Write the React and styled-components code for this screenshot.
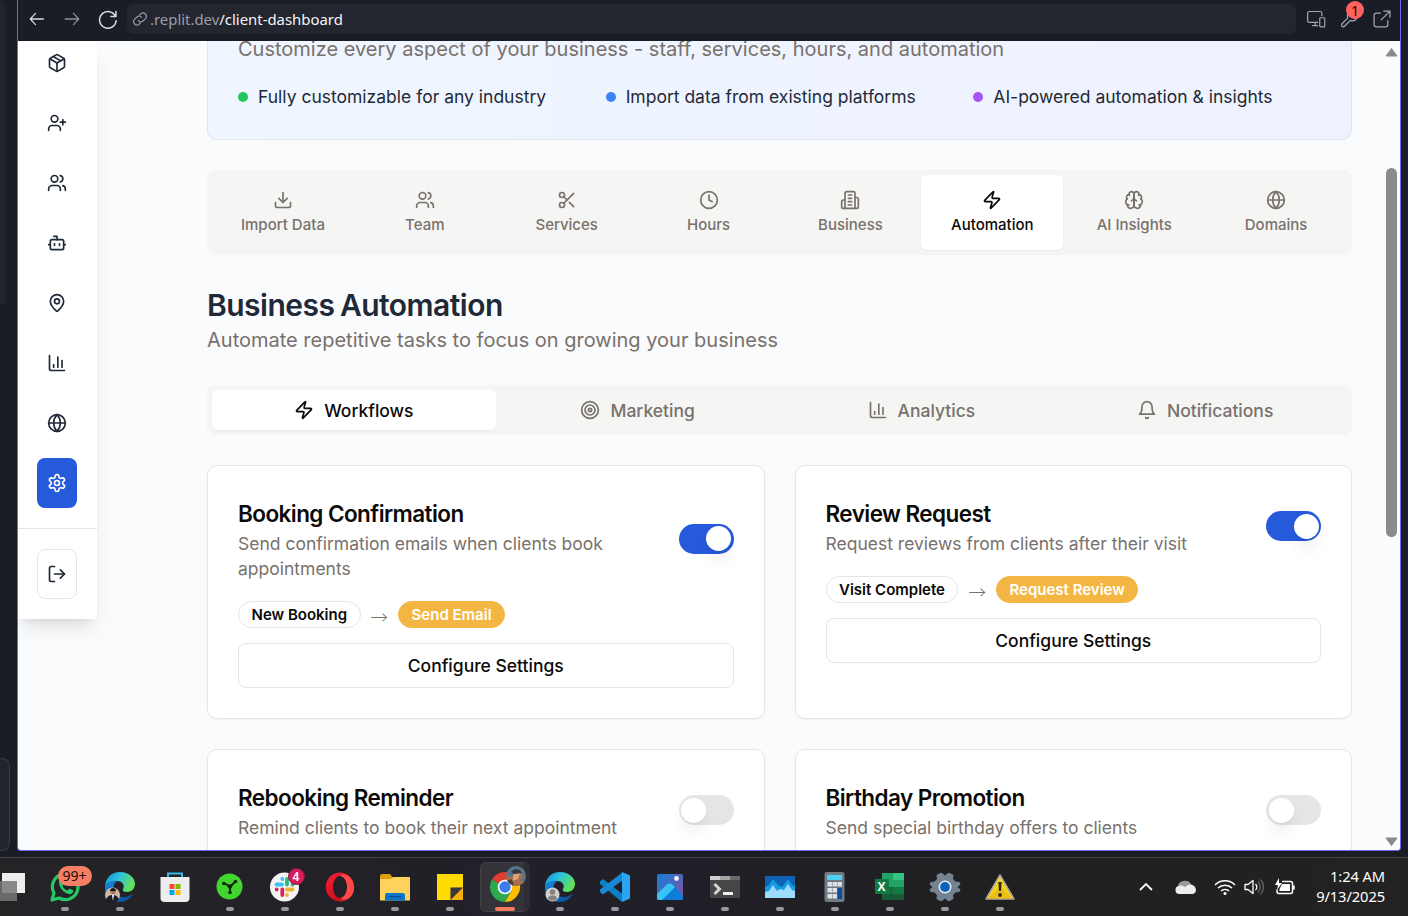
import React from "react";
import styled, { createGlobalStyle, css } from "styled-components";
import {
  Package, UserPlus, Users, Bot, MapPin, ChartColumn, Globe, LogOut, Download, Scissors, Clock, Zap, Target,
} from "lucide-react";

const GlobalStyle = createGlobalStyle`
  *, *::before, *::after { box-sizing: border-box; }
  body { margin: 0; background: #1b1d26; font-family: Inter, "Liberation Sans", sans-serif; }
  button { font: inherit; }
  h2, h3, p { margin: 0; }
`;

/* ---------- shared line icons ---------- */

const Line = ({ size = 20, width = 2, children }) => (
  <svg width={size} height={size} viewBox="0 0 24 24" fill="none" stroke="currentColor" strokeWidth={width}
    strokeLinecap="round" strokeLinejoin="round">{children}</svg>
);

const Gear = () => (
  <Line>
    <path d="M12.22 2h-.44a2 2 0 0 0-2 2v.18a2 2 0 0 1-1 1.73l-.43.25a2 2 0 0 1-2 0l-.15-.08a2 2 0 0 0-2.73.73l-.22.38a2 2 0 0 0 .73 2.73l.15.1a2 2 0 0 1 1 1.72v.51a2 2 0 0 1-1 1.74l-.15.09a2 2 0 0 0-.73 2.73l.22.38a2 2 0 0 0 2.73.73l.15-.08a2 2 0 0 1 2 0l.43.25a2 2 0 0 1 1 1.73V20a2 2 0 0 0 2 2h.44a2 2 0 0 0 2-2v-.18a2 2 0 0 1 1-1.73l.43-.25a2 2 0 0 1 2 0l.15.08a2 2 0 0 0 2.73-.73l.22-.39a2 2 0 0 0-.73-2.73l-.15-.08a2 2 0 0 1-1-1.74v-.5a2 2 0 0 1 1-1.74l.15-.09a2 2 0 0 0 .73-2.73l-.22-.38a2 2 0 0 0-2.73-.73l-.15.08a2 2 0 0 1-2 0l-.43-.25a2 2 0 0 1-1-1.73V4a2 2 0 0 0-2-2z" />
    <circle cx="12" cy="12" r="3" />
  </Line>
);
const Building = () => (
  <Line>
    <path d="M6 22V4a2 2 0 0 1 2-2h8a2 2 0 0 1 2 2v18Z" />
    <path d="M6 12H4a2 2 0 0 0-2 2v6a2 2 0 0 0 2 2h2" />
    <path d="M18 9h2a2 2 0 0 1 2 2v9a2 2 0 0 1-2 2h-2" />
    <path d="M10 6h4M10 10h4M10 14h4M10 18h4" />
  </Line>
);
const BrainIcon = () => (
  <Line>
    <path d="M12 5a3 3 0 1 0-5.997.125 4 4 0 0 0-2.526 5.77 4 4 0 0 0 .556 6.588A4 4 0 1 0 12 18Z" />
    <path d="M12 5a3 3 0 1 1 5.997.125 4 4 0 0 1 2.526 5.77 4 4 0 0 1-.556 6.588A4 4 0 1 1 12 18Z" />
    <path d="M15 13a4.5 4.5 0 0 1-3-4 4.5 4.5 0 0 1-3 4" />
    <path d="M17.599 6.5a3 3 0 0 0 .399-1.375M6.003 5.125A3 3 0 0 0 6.401 6.5M3.477 10.896a4 4 0 0 1 .585-.396M19.938 10.5a4 4 0 0 1 .585.396M6 18a4 4 0 0 1-1.967-.516M19.967 17.484A4 4 0 0 1 18 18" />
  </Line>
);
const BellIcon = () => (
  <Line>
    <path d="M6 8a6 6 0 0 1 12 0c0 7 3 9 3 9H3s3-2 3-9" />
    <path d="M10.3 21a1.94 1.94 0 0 0 3.4 0" />
  </Line>
);

/* ---------- desktop and window ---------- */

const Desktop = styled.div`
  width: 1408px; height: 916px; overflow: hidden;
  display: flex; flex-direction: column; background: #1b1d26;
`;
const Workspace = styled.div`
  height: 857px; display: flex; padding-bottom: 6px;
`;
const EdgeColumn = styled.div`
  width: 17px; display: flex; flex-direction: column; justify-content: space-between;
`;
const EdgePanel = styled.div`
  width: ${(p) => p.$w}px; height: ${(p) => p.$h}px; background: #22252e;
  border-radius: 0 8px 8px 0;
  ${(p) => p.$outlined && css`border: 1px solid #363944; border-left: 0;`}
`;
const Window = styled.div`
  width: 1384px; height: 851px; display: flex; flex-direction: column;
  border: 1px solid #7160f0; border-top: 0; border-radius: 0 0 4px 4px; overflow: hidden; background: #fafbfd;
`;
const Toolbar = styled.div`
  height: 41px; flex: none; background: #1b1d26; color: #d8dae2;
  display: flex; align-items: center; padding: 0 8px 3px 10px;
`;
const NavIcons = styled.div`
  display: flex; gap: 17px; width: 99px; align-items: center;
  svg:nth-child(2) { color: #8d909c; }
`;
const AddressField = styled.div`
  flex: 1; height: 30px; background: #23262f; border-radius: 6px; color: #9a9da8;
  display: flex; align-items: center; padding-left: 5px; gap: 2px;
  font: 14.9px "Noto Sans", sans-serif; white-space: pre;
  span { padding-bottom: 1px; }
  b { font-weight: 400; color: #f4f5f8; }
`;
const ToolIcons = styled.div`
  display: flex; align-items: center; gap: 13px; padding-left: 10px; color: #a4a7b2;
`;
const BadgeHolder = styled.span`position: relative; display: flex;`;
const CountDot = styled.span`
  position: absolute; left: 7px; top: -8px; width: 18px; height: 18px; border-radius: 50%;
  background: #ff625f; color: #33090b; font: 15px/18px "Noto Sans", sans-serif; text-align: center;
`;

const Page = styled.div`flex: 1; min-height: 0; display: flex; overflow: hidden;`;

const Sidebar = styled.aside`
  width: 79px; height: 578px; flex: none; background: #fff; padding-bottom: 20px;
  box-shadow: 0 12.5px 19px -4px rgba(0,0,0,.1), 0 5px 7.5px -5px rgba(0,0,0,.1);
  display: flex; flex-direction: column; align-items: flex-start; overflow: visible;
`;
const SideNav = styled.nav`
  width: 100%; height: 488px; border-bottom: 1px solid #e2e4e8;
  display: flex; flex-direction: column; align-items: flex-start; justify-content: flex-end; gap: 10px; padding-bottom: 20px;
`;
const SideButton = styled.button`
  width: 40px; height: 50px; flex: none; margin-left: 19px; padding: 0; border: 1px solid transparent; border-radius: 8px;
  display: flex; align-items: center; justify-content: center;
  background: ${(p) => (p.$active ? "#255bdb" : "#fff")}; color: ${(p) => (p.$active ? "#fff" : "#1f2937")};
  ${(p) => p.$outlined && css`border-color: #e5e5e5; margin-top: 20px;`}
`;

const Main = styled.main`
  width: 1286px; flex: none; padding-left: 110px;
`;
const Content = styled.div`width: 1145px;`;

const Banner = styled.section`
  display: flow-root; height: 99px; padding: 0 30px;
  border: 1px solid #e3e5eb; border-top: 0; border-radius: 0 0 10px 10px;
  background: linear-gradient(90deg, #eff6ff, #eef2ff);
`;
const Muted = styled.p`
  font-size: 20px; line-height: 30px; color: #78716c; white-space: nowrap;
`;
const BannerText = styled(Muted)`margin-top: -7px;`;
const SubHeading = styled(Muted)`padding-top: 1px;`;
const Points = styled.div`
  display: grid; grid-template-columns: repeat(3, 1fr); gap: 20px; margin-top: 20px;
`;
const Point = styled.div`
  display: flex; align-items: center; gap: 10px; font-size: 17.5px; line-height: 25px; color: #1f2937;
  &::before { content: ""; width: 10px; height: 10px; border-radius: 50%; background: ${(p) => p.$dot}; }
`;

const TabBar = styled.div`
  margin-top: 30px; height: 85px; padding: 5px; border-radius: 8px; background: #f5f5f4;
  display: grid; grid-template-columns: repeat(8, 1fr);
`;
const Tab = styled.button`
  border: 0; padding: 0 0 1px; border-radius: 6px; background: ${(p) => (p.$active ? "#fff" : "transparent")};
  color: ${(p) => (p.$active ? "#0c0a09" : "#78716c")};
  box-shadow: ${(p) => (p.$active ? "0 1px 2px rgba(0,0,0,.06)" : "none")};
  display: flex; flex-direction: column; align-items: center; justify-content: center; gap: 5px;
  font-size: 15px; line-height: 20px; font-weight: 500;
`;
const Heading = styled.h2`
  margin-top: 31px; font-size: 30px; line-height: 38px; font-weight: 600; color: #1f2937; letter-spacing: -0.52px;
  word-spacing: -1.5px;
`;
const SubTabBar = styled.div`
  margin-top: 30px; height: 50px; padding: 5px; border-radius: 8px; background: #f5f5f4;
  display: grid; grid-template-columns: repeat(4, 1fr);
`;
const SubTab = styled(Tab)`
  flex-direction: row; gap: 10px; font-size: 17.5px; line-height: 21px; padding: 1px 0 0;
  svg { margin-bottom: 1px; }
`;
const Cards = styled.div`
  margin-top: 30px; display: grid; grid-template-columns: 1fr 1fr; gap: 30px;
`;
const Card = styled.article`
  height: 254px; padding: 30px; background: #fff; border: 1px solid #e5e6e8; border-radius: 10px;
  box-shadow: 0 1px 2px rgba(0,0,0,.05);
`;
const CardHead = styled.header`
  display: flex; align-items: center; justify-content: space-between; margin-bottom: 20px;
`;
const CardTitle = styled.h3`
  font-size: 22.5px; line-height: 35px; font-weight: 600; letter-spacing: -0.56px; color: #0c0a09;
`;
const CardText = styled.p`
  width: 400px; font-size: 17.5px; line-height: 25px; color: #78716c;
`;
const Switch = styled.span`
  width: 55px; height: 30px; flex: none; border-radius: 15px; padding: 2.5px; display: flex;
  justify-content: ${(p) => (p.$on ? "flex-end" : "flex-start")};
  background: ${(p) => (p.$on ? "#255bdb" : "#e5e5e4")};
  &::before {
    content: ""; width: 25px; height: 25px; border-radius: 50%; background: #fff;
    box-shadow: 0 12px 18px -4px rgba(0,0,0,.1), 0 5px 7px -5px rgba(0,0,0,.1);
  }
`;
const Flow = styled.div`
  display: flex; align-items: center; gap: 10px; height: 27px; margin-bottom: 15px; color: #78716c;
`;
const Pill = styled.span`
  height: 27px; padding: 0 12.5px; border-radius: 14px; border: 1px solid ${(p) => (p.$filled ? "#f4b643" : "#e5e5e5")};
  background: ${(p) => (p.$filled ? "#f4b643" : "#fff")}; color: ${(p) => (p.$filled ? "#fff" : "#0c0a09")};
  font-size: 15px; line-height: 25px; font-weight: 600; white-space: nowrap;
`;
const FlowArrow = styled.span`
  width: 17.5px; font: 300 17.5px/27px "Noto Sans CJK JP", sans-serif; padding-top: 3px;
`;
const ConfigureButton = styled.button`
  width: 100%; height: 45px; border: 1px solid #e5e5e5; border-radius: 8px; background: #fff; color: #0c0a09;
  font-size: 17.5px; font-weight: 500; padding: 0;
`;

const Scrollbar = styled.div`
  width: 17px; flex: none; background: #fcfcfc; display: flex; flex-direction: column; align-items: center;
  padding: 6px 0 3px 0; justify-content: space-between;
`;
const ScrollThumb = styled.div`
  width: 11px; height: 369px; border-radius: 6px; background: #8b8b8b; margin-bottom: 190px;
`;

/* ---------- taskbar ---------- */

const Taskbar = styled.footer`
  height: 59px; display: flex; border-top: 1px solid #46464b;
  background: linear-gradient(90deg, #242326 0%, #211f28 45%, #202020 75%, #222 100%);
`;
const AppCell = styled.div`
  position: relative; width: ${(p) => p.$w || 55}px; flex: none; display: flex; flex-direction: column;
  align-items: center; padding-top: 14px; height: 58px;
  svg { display: block; overflow: visible; }
`;
const RunMark = styled.i`
  width: ${(p) => (p.$current ? 20 : 8)}px; height: 4px; border-radius: 2px; margin-top: 5px; flex: none;
  background: ${(p) => (p.$current ? "#f47b61" : "#98979b")};
`;
const ActiveTile = styled.div`
  position: absolute; left: 2px; top: 4px; width: 50px; height: 50px; border-radius: 6px;
  background: #343339; border: 1px solid #403f44; border-right-width: 6px; border-right-color: #2d2c32;
  & ~ * { z-index: 1; }
`;
const UnreadPill = styled.span`
  position: absolute; left: 20px; top: 8px; width: 34px; height: 20px; border-radius: 10px; background: #f47f64;
  color: #1c0e0b; font: 14px/20px "Noto Sans", sans-serif; text-align: center;
`;
const UnreadDot = styled.span`
  position: absolute; left: 30px; top: 10px; width: 17px; height: 17px; border-radius: 50%; background: #d81b5c;
  border: 1px solid #80183f; color: #fff; font: 600 12px/15px "Noto Sans", sans-serif; text-align: center;
`;
const Tray = styled.div`
  margin-left: auto; display: flex; align-items: center; color: #f7f7f7; padding-right: 23px;
  > svg { flex: none; }
`;
const CloudIcon = styled.svg`margin-left: 21px;`;
const WifiIcon = styled.svg`margin-left: 17px;`;
const VolumeIcon = styled.svg`margin-left: 8px;`;
const BatteryIcon = styled.svg`margin-left: 9px;`;
const ClockText = styled.time`
  width: 89px; text-align: right; font: 14.7px/20px "Noto Sans", sans-serif; color: #fff; letter-spacing: -0.1px;
  padding-bottom: 2px;
`;

const AppSvg = ({ children }) => <svg width="30" height="30" viewBox="0 0 30 30">{children}</svg>;

const EdgeArt = ({ id, children }) => (
  <AppSvg>
    <defs>
      <linearGradient id={id + "a"} x1="0" y1="0" x2="1" y2=".4"><stop offset="0" stopColor="#1789d8" /><stop offset=".5" stopColor="#2cc3dd" /><stop offset="1" stopColor="#62e05a" /></linearGradient>
      <linearGradient id={id + "b"} x1="0" y1="0" x2="1" y2="1"><stop offset="0" stopColor="#1687dc" /><stop offset="1" stopColor="#0b4c98" /></linearGradient>
    </defs>
    <path d="M0 14C1 5 7 0 15 0c9 0 15 6 15 12 0 5-4 8-8 8-3 0-5-1-4-3 2-3 0-8-6-8C7 9 2 11 0 14z" fill={`url(#${id}a)`} />
    <path d="M0 14c2-4 7-6 12-5-3 2-4 5-3 9 1 5 7 8 12 7 3-1 5-2 7-3-3 5-8 8-13 8C6 30-1 23 0 14z" fill={`url(#${id}b)`} />
    {children}
  </AppSvg>
);

const WhatsAppArt = () => (
  <AppSvg>
    <path d="M2 28l2-7A12.8 12.8 0 1 1 9 26z" fill="none" stroke="#25c864" strokeWidth="3.2" strokeLinejoin="round" />
    <path d="M9 10c0-2 2-3 3-2l2 4-1.500 2c1 2 2.500 3.500 5 4.500l2-2 4 2c0 2-2 4-4 3.700C14 21.500 9 16 9 10z" fill="#25c864" />
  </AppSvg>
);
const StoreArt = () => (
  <AppSvg>
    <path d="M8 6V1.500h14V6" fill="none" stroke="#36b7ef" strokeWidth="2" />
    <path d="M.5 5h29v21a4 4 0 0 1-4 4h-21a4 4 0 0 1-4-4z" fill="#ededed" />
    <path fill="#f25022" d="M9.500 12h5v5h-5z" /><path fill="#7fba00" d="M15.500 12h5v5h-5z" />
    <path fill="#00a4ef" d="M9.500 18h5v5h-5z" /><path fill="#ffb900" d="M15.500 18h5v5h-5z" />
  </AppSvg>
);
const HubArt = () => (
  <AppSvg>
    <circle cx="14.500" cy="14.500" r="13" fill="#41d62e" />
    <path d="M9 11l6 3.500L20 10M15 14L15 20" stroke="#10250d" strokeWidth="1.800" strokeLinecap="round" fill="none" />
    <path d="M11 12c3 1 5 1 8-1l-3 6h-2z" fill="#10250d" />
    <circle cx="8.800" cy="11.500" r="1.800" fill="#10250d" /><circle cx="20.500" cy="9.500" r="1.800" fill="#10250d" /><circle cx="15" cy="20.500" r="1.800" fill="#10250d" />
  </AppSvg>
);
const SlackArt = () => (
  <AppSvg>
    <circle cx="14.500" cy="15" r="14.500" fill="#f4f4f4" />
    <g strokeWidth="3.800" strokeLinecap="round" fill="none">
      <path d="M6.500 12.500h5.500M12.300 7v.1" stroke="#36c5f0" /><path d="M17 7v5.500M22.500 12.500h.1" stroke="#2eb67d" />
      <path d="M17 17.500h5.500M17 23v.1" stroke="#ecb22e" /><path d="M12.300 17.500V23M6.600 17.500h.1" stroke="#e01e5a" />
    </g>
  </AppSvg>
);
const OperaArt = () => (
  <AppSvg>
    <defs><linearGradient id="op" x1="0" y1="0" x2="1" y2="1"><stop offset="0" stopColor="#ff2035" /><stop offset=".7" stopColor="#c40d1c" /><stop offset="1" stopColor="#ff5a55" /></linearGradient></defs>
    <path fillRule="evenodd" fill="url(#op)" d="M15 .5a14.300 14.500 0 1 0 .01 0zM15 4a7 11 0 1 1-.01 0z" />
    <path d="M15 4c4-3 9-1 11.500 3.500 4 6 3 14-1.500 18-3 2.500-7 2.500-10 .5 4 0 7-5 7-11s-3-11-7-11z" fill="#ff4a48" />
  </AppSvg>
);
const FolderArt = () => (
  <AppSvg>
    <path d="M0 4a2 2 0 0 1 2-2h8l3 4v6H0z" fill="#dc9e0c" />
    <path d="M0 7h11l2-2h17v23.500H0z" fill="#ffd35b" />
    <path d="M5 28.500V23a2 2 0 0 1 2-2h16a2 2 0 0 1 2 2v5.500z" fill="#0d75c9" /><path d="M8.500 24.500h13" stroke="#084f91" strokeWidth="1.200" />
  </AppSvg>
);
const NotesArt = () => (
  <AppSvg>
    <path d="M2 2h26v26H2z" fill="#ffdb05" /><path d="M15.500 15.500H28V28H15.500z" fill="#f3b30b" /><path d="M15.500 15.500H28L15.500 28z" fill="#3a3939" />
  </AppSvg>
);
const ChromeArt = () => (
  <AppSvg>
    <clipPath id="avatar"><circle cx="26" cy="4" r="10" /></clipPath>
    <path d="M15 15L2 7.500A15 15 0 0 1 28 7.500z" fill="#e33b2e" />
    <path d="M15 15L2 7.500A15 15 0 0 0 15 30l6.500-11.300z" fill="#2da94f" />
    <path d="M15 30A15 15 0 0 0 28 7.500H15l6.500 11.200z" fill="#fdbd00" />
    <circle cx="15" cy="15" r="7.300" fill="#fff" /><circle cx="15" cy="15" r="5.700" fill="#3b7ded" />
    <g clipPath="url(#avatar)">
      <path d="M16-6h20v20H16z" fill="#587487" />
      <path d="M16 4l6 1 2-4 7-1 2 5-3 4 6 1v4H20z" fill="#a96d49" />
      <path d="M24 2l6-1-2 6-6 2z" fill="#d7a57c" /><path d="M21 0l4-3 5 1 2 3-8 1z" fill="#303744" />
      <path d="M17 9l5-2 2 7h-5z" fill="#4c3e3c" />
    </g>
  </AppSvg>
);
const CodeArt = () => (
  <AppSvg>
    <path d="M0 9.500L3 7l19.500 15L22 30 0 12z" fill="#0b7fc5" /><path d="M0 20l3 2.500L23 8V0L0 17.500z" fill="#1788d4" />
    <path d="M22 0l8 3.500v23L22 30z" fill="#2aa5f2" />
  </AppSvg>
);
const PhotosArt = () => (
  <AppSvg>
    <defs><linearGradient id="ph" x1="0" y1="0" x2="1" y2="1"><stop offset="0" stopColor="#137fd9" /><stop offset="1" stopColor="#8b4f9f" /></linearGradient></defs>
    <rect x="2" y="2" width="26" height="26" rx="2" fill="url(#ph)" />
    <path d="M2 26l11-14c1.500-2 3-2 5 0l10 12v2a2 2 0 0 1-2 2H4a2 2 0 0 1-2-2z" fill="#0f7cda" />
    <path d="M2 22l10-9.500c1.500-1.500 4-1.500 5.500 0L20 15 7 28H4a2 2 0 0 1-2-2z" fill="#37c4f2" /><circle cx="21.500" cy="6.500" r="2.400" fill="#f2efff" />
  </AppSvg>
);
const TerminalArt = () => (
  <AppSvg>
    <path d="M0 4h30v21a1 1 0 0 1-1 1H1a1 1 0 0 1-1-1z" fill="#464646" /><path d="M0 4h10v4H0z" fill="#d0d0d0" /><path d="M10 4h10v4H10z" fill="#a5a5a5" /><path d="M20 4h10v4H20z" fill="#6b6b6b" />
    <path d="M4.500 12l5 5-5 5" stroke="#d5d5d5" strokeWidth="3" fill="none" /><path d="M13 21.500h10" stroke="#eee" strokeWidth="3" />
  </AppSvg>
);
const MonitorArt = () => (
  <AppSvg>
    <path d="M0 4h30v22H0z" fill="#0d62b5" /><path d="M0 15l3-1 5-7 5 6 4 2 6-8 4 6 3 1v12H0z" fill="#169be2" />
    <path d="M0 20l4-1 4-6 4 6 3-2 4 1 4-6 4 6 3 1v7H0z" fill="#9cdcff" />
  </AppSvg>
);
const CalcArt = () => (
  <AppSvg>
    <rect x="4.500" y="0" width="20" height="30" rx="2" fill="#707a83" /><path d="M7 3h15v5H7z" fill="#4cd0ef" />
    <path d="M7.500 10h4.500v4.500H7.500zM12.500 10H17v4.500h-4.500zM17.500 10H22v4.500h-4.500zM7.500 16h4.500v4.500H7.500zM12.500 16H17v4.500h-4.500zM7.500 22h4.500v4.500H7.500zM12.500 22H17v4.500h-4.500z" fill="#dbe1e6" />
    <path d="M17.500 16H22v11h-4.500z" fill="#0f4d94" />
  </AppSvg>
);
const ExcelLetter = styled.span`
  position: absolute; left: 12px; top: 21px; width: 14px; height: 15px; background: #107c41; border-radius: 1px;
  color: #fff; font: 700 12px/15px "Open Sans", sans-serif; text-align: center;
`;
const ExcelArt = () => (
  <>
    <AppSvg>
      <path d="M7 1h11v14H7z" fill="#21a366" /><path d="M18 1h11v7H18z" fill="#33c481" /><path d="M18 8h11v7H18z" fill="#21a366" />
      <path d="M7 15h11v13H7z" fill="#176b40" /><path d="M18 15h11v7H18z" fill="#107c41" /><path d="M7 22h22v6H7z" fill="#185c37" />
    </AppSvg>
    <ExcelLetter>X</ExcelLetter>
  </>
);
const SettingsArt = () => (
  <AppSvg>
    <path d="M10 1h2l3 2.500L18 1h2l3.500 2-.5 4 2.500 2.500 4 .5 1 2.500-3 2.500 3 2.500-1 2.500-4 .5-2.500 2.500.5 4-3.500 2h-2L15 26.500 12 29h-2l-3.500-2 .5-4-2.500-2.500-4-.5-1-2.500 3-2.500-3-2.500 1-2.500 4-.5L7 7l-.5-4z" fill="#75828f" />
    <circle cx="15" cy="15" r="6.500" fill="#e4edf3" /><circle cx="15" cy="15" r="4.900" fill="#0c61b8" />
  </AppSvg>
);
const WarningArt = () => (
  <AppSvg>
    <path d="M15 3L29 27H1z" fill="#f5d21c" stroke="#aaa7a0" strokeWidth="1.500" strokeLinejoin="round" /><path d="M15 15l13 12H2z" fill="#e1a713" opacity=".45" />
    <path d="M13.300 10h3.400l-.7 9h-2z" fill="#302b14" /><circle cx="15" cy="23" r="1.900" fill="#302b14" />
  </AppSvg>
);
const TaskViewArt = () => (
  <svg width="37" height="30" viewBox="0 0 37 30"><path d="M2 1h23v20H2z" fill="#eee" /><path d="M-4 9h21v20H-4z" fill="#777" opacity=".85" /></svg>
);

const apps = [
  { key: "whatsapp", art: <WhatsAppArt />, extra: <UnreadPill>99+</UnreadPill> },
  { key: "edge-user", art: <EdgeArt id="e1"><circle cx="7.500" cy="23" r="7.500" fill="#ceb9a5" /><path d="M1 28c1-4 4-5 7-5s5 2 6 4c-3 5-9 5-13 1z" fill="#1c1d24" /><circle cx="8" cy="19.500" r="2.600" fill="#a66f58" /><path d="M5 19c0-4 6-4 6 0z" fill="#171719" /><path d="M7 23h2l-1 6z" fill="#fff" /></EdgeArt> },
  { key: "store", art: <StoreArt />, idle: true },
  { key: "hub", art: <HubArt /> },
  { key: "slack", art: <SlackArt />, extra: <UnreadDot>4</UnreadDot> },
  { key: "opera", art: <OperaArt /> },
  { key: "files", art: <FolderArt /> },
  { key: "notes", art: <NotesArt /> },
  { key: "chrome", art: <ChromeArt />, current: true },
  { key: "edge-guest", art: <EdgeArt id="e2"><circle cx="7.500" cy="22.500" r="7" fill="#d2d0ce" /><circle cx="7.500" cy="20" r="2.800" fill="#85827f" /><path d="M3 27c0-5 9-5 9 0-2 2-7 2-9 0z" fill="#85827f" /></EdgeArt> },
  { key: "code", art: <CodeArt /> },
  { key: "photos", art: <PhotosArt /> },
  { key: "terminal", art: <TerminalArt /> },
  { key: "monitor", art: <MonitorArt /> },
  { key: "calc", art: <CalcArt /> },
  { key: "excel", art: <ExcelArt /> },
  { key: "settings", art: <SettingsArt /> },
  { key: "warning", art: <WarningArt /> },
];

const tabs = [
  ["Import Data", <Download size={20} />], ["Team", <Users size={20} />], ["Services", <Scissors size={20} />],
  ["Hours", <Clock size={20} />], ["Business", <Building />], ["Automation", <Zap size={20} />],
  ["AI Insights", <BrainIcon />], ["Domains", <Globe size={20} />],
];
const subTabs = [
  ["Workflows", <Zap size={20} />], ["Marketing", <Target size={20} />],
  ["Analytics", <ChartColumn size={20} />], ["Notifications", <BellIcon />],
];
const workflows = [
  { title: "Booking Confirmation", text: "Send confirmation emails when clients book appointments", from: "New Booking", to: "Send Email", on: true },
  { title: "Review Request", text: "Request reviews from clients after their visit", from: "Visit Complete", to: "Request Review", on: true },
  { title: "Rebooking Reminder", text: "Remind clients to book their next appointment", on: false },
  { title: "Birthday Promotion", text: "Send special birthday offers to clients", on: false },
];

function BrowserToolbar() {
  return (
    <Toolbar>
      <NavIcons>
        <Line size={18} width={1.7}><path d="M20.500 12H3M10 4.500L3 12l7 7.500" /></Line>
        <Line size={18} width={1.7}><path d="M3 12h18M14 4.500l7 7.500-7 7.500" /></Line>
        <Line size={20} width={1.8}><path d="M21.500 3v6h-6M21 9a10 10 0 1 0 .8 5" /></Line>
      </NavIcons>
      <AddressField>
        <Line size={16} width={1.7}><path d="M9.500 14.500a5 5 0 0 0 7 .5l4-4a5 5 0 0 0-7-7l-2 2" /><path d="M14.500 9.500a5 5 0 0 0-7-.5l-4 4a5 5 0 0 0 7 7l2-2" /></Line>
        <span>.replit.dev<b>/client-dashboard</b></span>
      </AddressField>
      <ToolIcons>
        <Line size={20} width={1.4}><path d="M14 16H4a2 2 0 0 1-2-2V5a2 2 0 0 1 2-2h13a2 2 0 0 1 2 2v3M11 16v4M8 20h6" /><rect x="16.500" y="10.500" width="6" height="11" rx="1" /></Line>
        <BadgeHolder>
          <Line size={20} width={1.5}><path d="M15 6a1 1 0 0 0 0 1.500L17 9.500a1 1 0 0 0 1.400 0l3.300-3.300a6 6 0 0 1-8 7.500l-7 7a2 2 0 0 1-3-3l7-7a6 6 0 0 1 8-8z" /></Line>
          <CountDot>1</CountDot>
        </BadgeHolder>
        <Line size={20} width={1.5}><path d="M14 2.500h7.500V10M21.500 2.500L11 13M10 5H5a2.500 2.500 0 0 0-2.500 2.500V19A2.500 2.500 0 0 0 5 21.500h11.500A2.500 2.500 0 0 0 19 19v-5" /></Line>
      </ToolIcons>
    </Toolbar>
  );
}

function WorkflowCard({ item }) {
  return (
    <Card>
      <CardHead>
        <div><CardTitle>{item.title}</CardTitle><CardText>{item.text}</CardText></div>
        <Switch $on={item.on} />
      </CardHead>
      {item.from && (
        <>
          <Flow><Pill>{item.from}</Pill><FlowArrow>→</FlowArrow><Pill $filled>{item.to}</Pill></Flow>
          <ConfigureButton>Configure Settings</ConfigureButton>
        </>
      )}
    </Card>
  );
}

export default function App() {
  return (
    <Desktop>
      <GlobalStyle />
      <Workspace>
        <EdgeColumn><EdgePanel $w={5} $h={305} /><EdgePanel $w={10} $h={93} $outlined /></EdgeColumn>
        <Window>
          <BrowserToolbar />
          <Page>
            <Sidebar>
              <SideNav>
                {[Package, UserPlus, Users, Bot, MapPin, ChartColumn, Globe].map((Icon, i) => (
                  <SideButton key={i}><Icon size={20} /></SideButton>
                ))}
                <SideButton $active><Gear /></SideButton>
              </SideNav>
              <SideButton $outlined><LogOut size={20} /></SideButton>
            </Sidebar>
            <Main>
              <Content>
                <Banner>
                  <BannerText>Customize every aspect of your business - staff, services, hours, and automation</BannerText>
                  <Points>
                    <Point $dot="#22c55e">Fully customizable for any industry</Point>
                    <Point $dot="#3b82f6">Import data from existing platforms</Point>
                    <Point $dot="#a855f7">AI-powered automation &amp; insights</Point>
                  </Points>
                </Banner>
                <TabBar>
                  {tabs.map(([name, icon]) => <Tab key={name} $active={name === "Automation"}>{icon}{name}</Tab>)}
                </TabBar>
                <Heading>Business Automation</Heading>
                <SubHeading>Automate repetitive tasks to focus on growing your business</SubHeading>
                <SubTabBar>
                  {subTabs.map(([name, icon]) => <SubTab key={name} $active={name === "Workflows"}>{icon}{name}</SubTab>)}
                </SubTabBar>
                <Cards>{workflows.map((w) => <WorkflowCard key={w.title} item={w} />)}</Cards>
              </Content>
            </Main>
            <Scrollbar>
              <svg width="13" height="10" viewBox="0 0 13 10"><path d="M6.500 1.500L12 9H1z" fill="#8b8b8b" stroke="#8b8b8b" strokeLinejoin="round" /></svg>
              <ScrollThumb />
              <svg width="13" height="10" viewBox="0 0 13 10"><path d="M6.500 8.500L12 1H1z" fill="#8b8b8b" stroke="#8b8b8b" strokeLinejoin="round" /></svg>
            </Scrollbar>
          </Page>
        </Window>
      </Workspace>
      <Taskbar>
        <AppCell $w={37.5}><TaskViewArt /></AppCell>
        {apps.map((a) => (
          <AppCell key={a.key}>
            {a.current && <ActiveTile />}
            {a.art}
            {!a.idle && <RunMark $current={a.current} />}
            {a.extra}
          </AppCell>
        ))}
        <Tray>
          <svg width="16" height="16" viewBox="0 0 16 16"><path d="M2 11l6-6 6 6" fill="none" stroke="#fff" strokeWidth="1.800" /></svg>
          <CloudIcon width="22" height="16" viewBox="0 0 22 16"><path d="M3 9a7 6.500 0 0 1 13-4l-7 7z" fill="#999" /><path d="M5 15a4 4 0 0 1-1-8c2-1 4 0 6 1l4-2.500c4-.5 7 2.500 7 5.500 0 2.500-2 4-4 4z" fill="#ededed" /></CloudIcon>
          <WifiIcon width="22" height="18" viewBox="0 0 22 18" fill="none" stroke="#fff" strokeWidth="1.500"><path d="M1 7a14 14 0 0 1 20 0M4 10a10 10 0 0 1 14 0M7 13a6 6 0 0 1 8 0" /><circle cx="11" cy="15.500" r="1.500" fill="#fff" stroke="none" /></WifiIcon>
          <VolumeIcon width="21" height="18" viewBox="0 0 21 18" fill="none" stroke="#fff" strokeWidth="1.300"><path d="M1 6.500h3l5-4v13l-5-4H1z" strokeLinejoin="round" /><path d="M11.500 6a4 4 0 0 1 0 6" /><path d="M14 3.500a8 8 0 0 1 0 11M16.500 1.500a11 11 0 0 1 0 15" stroke="#666" /></VolumeIcon>
          <BatteryIcon width="22" height="18" viewBox="0 0 22 18"><path d="M8 3.500h8.500a2 2 0 0 1 2 2v8a2 2 0 0 1-2 2H5a2 2 0 0 1-2-2v-2M20 7.500v4" fill="none" stroke="#fff" strokeWidth="1.500" /><path d="M8 6h8v7H5.500v-2z" fill="#fff" /><path d="M5 0L1 7h3l-1 5 5-7H5z" fill="#fff" /></BatteryIcon>
          <ClockText>1:24 AM<br />9/13/2025</ClockText>
        </Tray>
      </Taskbar>
    </Desktop>
  );
}
